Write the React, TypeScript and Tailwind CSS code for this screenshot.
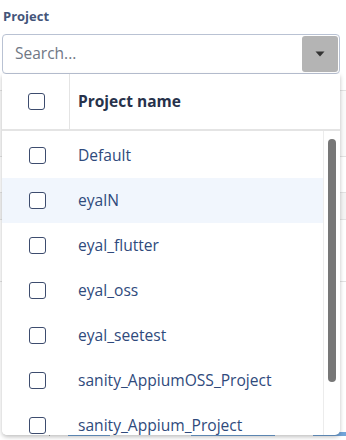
import { useState } from 'react';

const projects = [
  'Default',
  'eyalN',
  'eyal_flutter',
  'eyal_oss',
  'eyal_seetest',
  'sanity_AppiumOSS_Project',
  'sanity_Appium_Project',
];

const Box = () => (
  <span className="block w-[17px] h-[17px] rounded-[3px] border-[1.5px] border-[#3d4c6e] bg-white" />
);

const App = () => {
  const [hovered] = useState(1);

  return (
    <div
      className="relative w-[346px] h-[440px] overflow-hidden bg-white"
      style={{ fontFamily: '"Open Sans", "Noto Sans", sans-serif' }}
    >
      <div className="pl-[3px] pt-[7px] h-[34px] text-[13px] font-bold text-[#44557a]">Project</div>

      <div className="ml-[2px] w-[338px] h-[40px] flex items-center justify-between border border-[#b9c2d3] rounded-[4px] pl-[12px] pr-[1px]">
        <span className="text-[15.5px] text-[#6f7785]">Search...</span>
        <button className="w-[36px] h-[36px] rounded-[3px] bg-[#b4b4b4] flex items-center justify-center">
          <svg width="10" height="6" viewBox="0 0 10 6">
            <path d="M0.5 0.5h9L5 5.5z" fill="#333" />
          </svg>
        </button>
      </div>

      {/* page content behind the menu */}
      <div className="flex flex-col">
        <div className="h-[17px] border-b border-[#e2e2e2]" />
        <div className="h-[66px] border-b border-[#e2e2e2] bg-[#fafafa]" />
        <div className="h-[36px] border-b border-[#e2e2e2]" />
        <div className="h-[27px] border-b border-[#e2e2e2] bg-[#f4f4f4]" />
        <div className="h-[62px] border-b border-[#e2e2e2]" />
        <div className="h-[150px]" />
        <div className="h-[4px] flex">
          <div className="w-[49px]" />
          <div className="w-[1px] bg-[#999]" />
          <div className="w-[18px]" />
          <div className="w-[42px] bg-[#72a5da]" />
          <div className="w-[81px]" />
          <div className="w-[84px] bg-[#72a5da]" />
          <div className="w-[38px]" />
          <div className="flex-1 bg-[#72a5da]" />
        </div>
      </div>

      {/* dropdown menu */}
      <div className="absolute left-[2px] top-[74px] w-[338px] h-[361px] bg-white rounded-b-[5px] shadow-[0_2px_4px_rgba(0,0,0,0.25)] flex flex-col overflow-hidden">
        <div className="h-[57px] flex border-b-2 border-[#e4e4e4] shrink-0">
          <div className="w-[68px] flex items-center justify-center pl-[2px] border-r border-[#e4e4e4]">
            <Box />
          </div>
          <div className="flex items-center pl-[8px] text-[15.5px] font-bold text-[#27324b]">Project name</div>
        </div>
        <div className="flex flex-1 min-h-0">
          <div className="flex-1 pt-[2px] border-r border-[#ececec] overflow-hidden">
            {projects.map((p, i) => (
              <div
                key={p}
                className={`h-[45px] flex items-center ${i === hovered ? 'bg-[#f1f6fd]' : 'bg-white'}`}
              >
                <div className="w-[68px] flex justify-center pl-[2px]">
                  <Box />
                </div>
                <span className="pl-[8px] text-[15.6px] text-[#2f4a7c]">{p}</span>
              </div>
            ))}
          </div>
          <div className="w-[16px] pt-[8px] flex justify-center pr-[1px]">
            <div className="w-[8px] h-[243px] rounded-full bg-[#777]" />
          </div>
        </div>
      </div>
    </div>
  );
};

export default App;
